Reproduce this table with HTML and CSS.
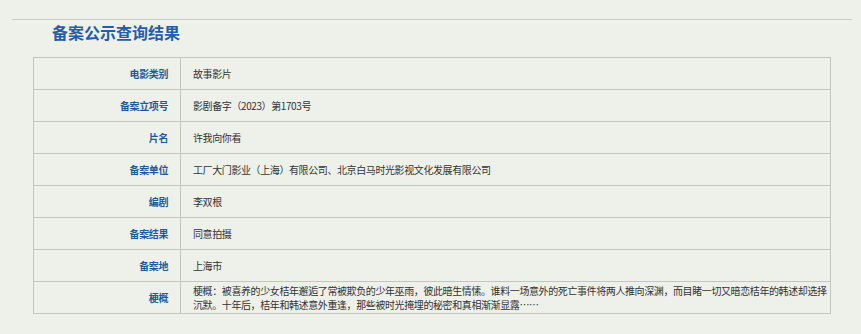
FILE: index.html
```html
<!DOCTYPE html>
<html lang="zh-CN">
<head>
<meta charset="utf-8">
<title>备案公示查询结果</title>
<link rel="stylesheet" href="styles.css">
</head>
<body>
<div class="page">
  <div class="head">
    <h2 class="title">备案公示查询结果</h2>
  </div>
  <table class="result">
    <tr><th>电影类别</th><td>故事影片</td></tr>
    <tr><th>备案立项号</th><td>影剧备字（2023）第1703号</td></tr>
    <tr><th>片名</th><td>许我向你看</td></tr>
    <tr><th>备案单位</th><td>工厂大门影业（上海）有限公司、北京白马时光影视文化发展有限公司</td></tr>
    <tr><th>编剧</th><td>李双根</td></tr>
    <tr><th>备案结果</th><td>同意拍摄</td></tr>
    <tr><th>备案地</th><td>上海市</td></tr>
    <tr class="summary"><th>梗概</th><td>梗概：被喜养的少女桔年邂逅了常被欺负的少年巫雨，彼此暗生情愫。谁料一场意外的死亡事件将两人推向深渊，而目睹一切又暗恋桔年的韩述却选择沉默。十年后，桔年和韩述意外重逢，那些被时光掩埋的秘密和真相渐渐显露……</td></tr>
  </table>
</div>
</body>
</html>
```
FILE: styles.css
```css
html, body {
  margin: 0;
  padding: 0;
}
body {
  background: #eef0ea;
  font-family: "Noto Sans CJK SC", "Noto Sans", sans-serif;
  color: #333;
}
.page {
  padding: 19px 9px 0 12px;
}
.head {
  border-top: 1px solid #c9cac5;
  height: 37px;
}
.title {
  margin: 0;
  padding: 1px 0 0 40px;
  font-size: 16px;
  line-height: 22px;
  font-weight: bold;
  color: #1f5ea8;
}
.result {
  margin-left: 21px;
  width: 798px;
  border-collapse: collapse;
  border: 1px solid #c4c4c0;
  font-size: 10px;
  letter-spacing: -0.4px;
}
.result th, .result td {
  border: 1px solid #c4c4c0;
  height: 31px;
  padding: 0;
  vertical-align: middle;
}
.result th {
  width: 134px;
  text-align: right;
  padding-right: 12px;
  color: #1e5a9c;
  font-weight: bold;
}
.result td {
  text-align: left;
  padding-left: 12px;
  padding-right: 0;
  color: #333;
  line-height: 14px;
}
```
